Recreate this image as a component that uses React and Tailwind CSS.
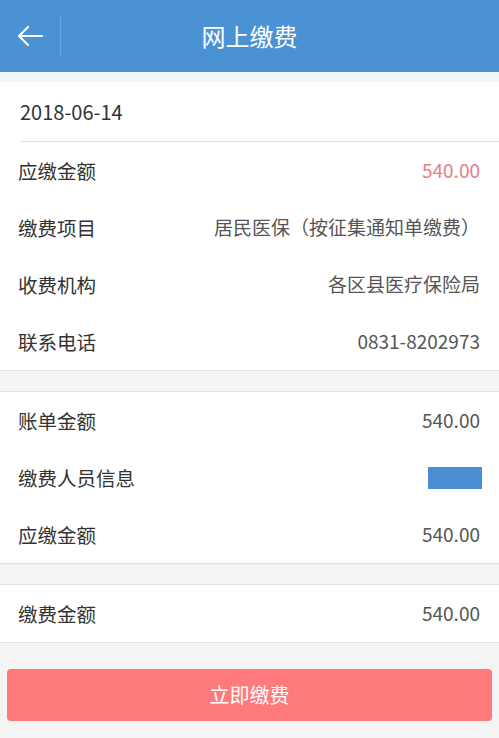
const FONT = { fontFamily: '"Noto Sans CJK SC", "Noto Sans", sans-serif' };

function Row({ label, value, valueClass = "text-[#555]" }) {
  return (
    <div className="flex items-center justify-between h-[57px] pl-[18px] pr-[19px]">
      <span className="text-[19.5px] text-[#333]">{label}</span>
      {typeof value === "string" ? (
        <span className={`text-[19px] ${valueClass}`}>{value}</span>
      ) : (
        value
      )}
    </div>
  );
}

export default function App() {
  return (
    <div className="w-[499px] h-[738px] bg-[#f4f4f4] overflow-hidden" style={FONT}>
      <header className="h-[72px] bg-[#4b92d5] flex items-center relative">
        <div className="w-[60px] h-full flex items-center justify-center">
          <svg width="28" height="24" viewBox="0 0 28 24" fill="none" stroke="#fff" strokeWidth="2.2" strokeLinecap="round" strokeLinejoin="round">
            <path d="M26 12H3M12 3L3 12l9 9" />
          </svg>
        </div>
        <div className="w-px h-[40px] bg-[#6aa6df]" />
        <h1 className="absolute left-0 right-0 text-center text-[24px] text-white pointer-events-none">
          网上缴费
        </h1>
      </header>

      <div className="h-[10px] bg-[#f2f5f8]" />

      <section className="bg-white border-b border-[#e2e2e2]">
        <div className="pl-[20px]">
          <div className="h-[60px] flex items-center border-b border-[#e0e0e0]">
            <span className="text-[20px] text-[#333]">2018-06-14</span>
          </div>
        </div>
        <Row label="应缴金额" value="540.00" valueClass="text-[#e57e84]" />
        <Row label="缴费项目" value="居民医保（按征集通知单缴费）" />
        <Row label="收费机构" value="各区县医疗保险局" />
        <Row label="联系电话" value="0831-8202973" />
      </section>

      <div className="h-[20px]" />

      <section className="bg-white border-y border-[#e2e2e2]">
        <Row label="账单金额" value="540.00" />
        <Row
          label="缴费人员信息"
          value={<span className="w-[54px] h-[22px] bg-[#4a8fd4] mr-[-2px]" />}
        />
        <Row label="应缴金额" value="540.00" />
      </section>

      <div className="h-[20px]" />

      <section className="bg-white border-y border-[#e2e2e2]">
        <Row label="缴费金额" value="540.00" />
      </section>

      <div className="px-[7px] pt-[26px]">
        <button className="w-full h-[52px] rounded-[4px] bg-[#ff7a7a] text-white text-[20px]">
          立即缴费
        </button>
      </div>
    </div>
  );
}
